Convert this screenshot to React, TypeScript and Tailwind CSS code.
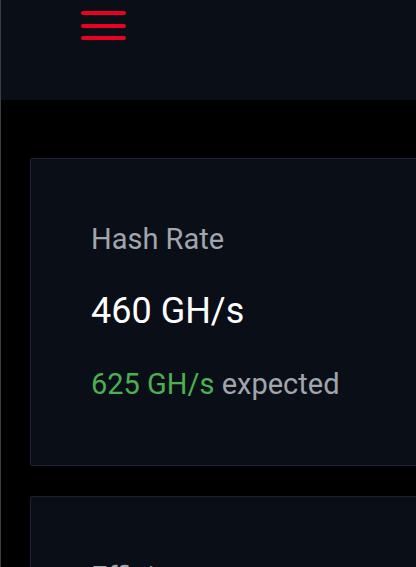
import React from 'react';

const stats = [
  { label: 'Hash Rate', value: '460 GH/s', expected: '625 GH/s' },
  { label: 'Efficiency', value: '23.4 J/TH', expected: '' },
];

const App: React.FC = () => {
  return (
    <div className="min-h-[567px] bg-black border-l border-[#3a3f46] overflow-hidden" style={{ fontFamily: 'Roboto, "Liberation Sans", sans-serif' }}>
      <header className="h-[100px] bg-[#0a0e17] pl-[80px] pt-[11px]">
        <button className="flex flex-col gap-[8.5px] w-[45px]" aria-label="menu">
          <span className="block h-[4px] w-full rounded-full bg-[#ec0020]" />
          <span className="block h-[4px] w-full rounded-full bg-[#ec0020]" />
          <span className="block h-[4px] w-full rounded-full bg-[#ec0020]" />
        </button>
      </header>

      <main className="pt-[58px] pl-[29px] flex flex-col gap-[30px]">
        {stats.map(s => (
          <div key={s.label} className="w-[440px] shrink-0 bg-[#0a0e17] border border-[#1c232c] rounded-[2px] pl-[60px] pt-[62px] pb-[63px]">
            <p className="text-[29px] leading-[36px] text-[#a1a5ac]">{s.label}</p>
            <p className="mt-[33px] text-[36px] leading-[42px] text-white">{s.value}</p>
            <p className="mt-[34px] text-[29px] leading-[36px] text-[#a1a5ac]">
              <span className="text-[#4caf50]">{s.expected}</span> expected
            </p>
          </div>
        ))}
      </main>
    </div>
  );
};

export default App;
